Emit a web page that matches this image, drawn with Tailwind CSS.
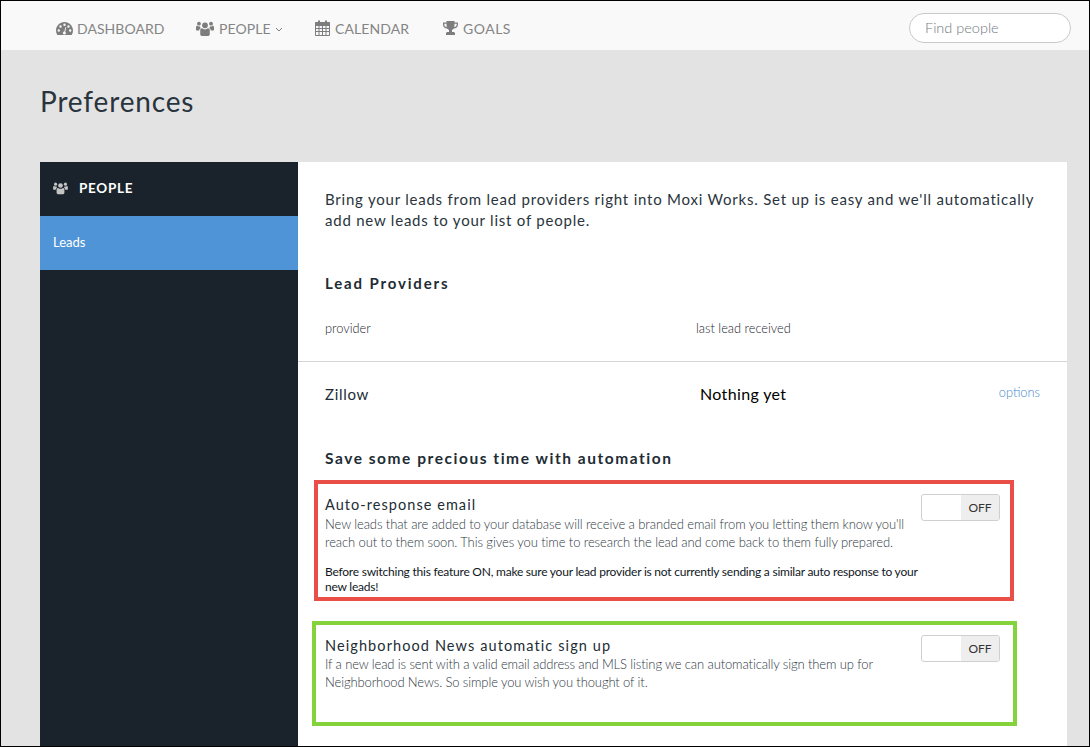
<!DOCTYPE html>
<html><head><meta charset="utf-8"><script src="https://cdn.jsdelivr.net/npm/@tailwindcss/browser@4"></script></head>
<body class="m-0">
<div class="w-[1090px] h-[747px] overflow-hidden border border-black bg-[#e3e3e3] font-['Lato',sans-serif] text-[#1b242c] box-border">
  <nav class="h-[49px] bg-[#f9f9f9] flex items-center pl-[55px] pr-[18px] text-[14px] text-[#858585]">
    <a class="flex items-center gap-[4px] w-[140px] pt-[6px]">
      <svg class="w-[17px] h-[15px]" viewBox="0 0 17 15"><path fill="#7d7d7d" fill-rule="evenodd" d="M8.5 1C3.8 1 0 4.8 0 9.5c0 1.6.4 3 1.2 4.3.2.2.4.2.6.2h13.4c.2 0 .4 0 .6-.2.8-1.3 1.2-2.7 1.2-4.3C17 4.8 13.200 1 8.500 1zM8.500 2.600a1.200 1.200 0 1 1 0 2.400 1.200 1.200 0 0 1 0-2.400zM4.500 4.300a1.200 1.200 0 1 1 0 2.400 1.200 1.200 0 0 1 0-2.400zM12.500 4.300a1.200 1.200 0 1 1 0 2.400 1.200 1.200 0 0 1 0-2.400zM2.800 8.300a1.200 1.200 0 1 1 0 2.400 1.200 1.200 0 0 1 0-2.400zM14.200 8.300a1.200 1.200 0 1 1 0 2.400 1.200 1.200 0 0 1 0-2.400zM9.500 6l.8.200-1.100 4.500c.5.400.8 1 .6 1.700-.2.800-1 1.300-1.800 1.100-.8-.2-1.300-1-1.100-1.800.2-.7.700-1.100 1.400-1.100z"/></svg>
      <span class="tracking-[0.05px]">DASHBOARD</span>
    </a>
    <a class="flex items-center gap-[5px] w-[119px] pt-[6px]">
      <svg class="w-[18px] h-[16px]" viewBox="0 0 17 15"><g fill="#7d7d7d"><circle cx="8.500" cy="4" r="2.700"/><circle cx="2.800" cy="2.500" r="1.800"/><circle cx="14.200" cy="2.500" r="1.800"/><path d="M4 8.500c0-1 .8-1.700 1.700-1.700.8.700 1.800 1.100 2.800 1.100s2-.4 2.800-1.100c.9 0 1.700.7 1.700 1.700v4c0 1-.8 1.500-1.500 1.500H5.500C4.800 14 4 13.500 4 12.500z"/><path d="M0 6c0-.9.500-1.500 1.300-1.500.5.400 1 .6 1.500.6.300 0 .7 0 1-.2 0 .8.300 1.500.8 2C3.700 7 3 8 3 9H1C.4 9 0 8.600 0 8z"/><path d="M17 6c0-.9-.5-1.500-1.300-1.500-.5.400-1 .6-1.500.6-.3 0-.7 0-1-.2 0 .8-.3 1.500-.8 2 .9.100 1.600 1.100 1.600 2.100h2c.6 0 1-.4 1-1z"/></g></svg>
      <span class="tracking-[0.1px]">PEOPLE</span>
      <svg class="w-[8px] h-[5px] -ml-[1px] mt-[1px]" viewBox="0 0 8 5"><path d="M1 1l3 3 3-3" fill="none" stroke="#7d7d7d" stroke-width="1"/></svg>
    </a>
    <a class="flex items-center gap-[5px] w-[128px] pt-[5px]">
      <svg class="w-[15px] h-[16px]" viewBox="0 0 15 16"><path fill="#7d7d7d" fill-rule="evenodd" d="M1 2h2V.5h2V2h5V.5h2V2h2c.6 0 1 .4 1 1v12c0 .6-.4 1-1 1H1c-.6 0-1-.4-1-1V3c0-.6.4-1 1-1zM1 6v2h2.500V6zM4.500 6v2H7V6zM8 6v2h2.500V6zM11.500 6v2H14V6zM1 9v2h2.500V9zM4.500 9v2H7V9zM8 9v2h2.500V9zM11.500 9v2H14V9zM1 12v2.900h2.500V12zM4.500 12v2.900H7V12zM8 12v2.900h2.500V12zM11.500 12v2.900H14V12z"/></svg>
      <span class="tracking-[0.1px]">CALENDAR</span>
    </a>
    <a class="flex items-center gap-[5px] pt-[6px]">
      <svg class="w-[15px] h-[15px]" viewBox="0 0 15 15"><path fill="#7d7d7d" fill-rule="evenodd" d="M3.500 0h8v1.500H15v2c0 2.400-1.900 4-4.500 4.300-.5.600-1 1-1.500 1.200V11h1.500c.8 0 1.500.6 1.500 1.500V14H3v-1.500c0-.9.700-1.500 1.500-1.500H6V9c-.5-.2-1-.6-1.500-1.200C1.900 7.500 0 5.900 0 3.500v-2h3.500zM1.300 2.800v.7c0 1.300.9 2.300 2.500 2.800-.2-1-.3-2.300-.3-3.500zM13.700 2.800h-2.200c0 1.200-.1 2.500-.3 3.500 1.600-.5 2.500-1.500 2.500-2.800z"/></svg>
      <span class="tracking-[0.5px]">GOALS</span>
    </a>
    <div class="ml-auto mt-[5px] w-[162px] h-[30px] rounded-full border border-[#c9c9c9] bg-white flex items-center pl-[15px] text-[14.500px] font-light text-[#707a80]">Find people</div>
  </nav>
  <h1 class="ml-[39px] mt-[30px] text-[28px] leading-[42px] font-normal tracking-[0.85px] text-[#2a343c]">Preferences</h1>
  <div class="ml-[39px] mt-[40px] w-[1027px] h-[600px] bg-white flex">
    <aside class="w-[258px] bg-[#1a232b] shrink-0">
      <div class="h-[54px] flex items-center pl-[13px] pb-[2px] gap-[11px] text-white font-bold text-[13.500px] tracking-[0.7px]">
        <svg class="w-[15px] h-[13px] mt-[1px]" viewBox="0 0 17 15"><g fill="#c4c4c4"><circle cx="8.500" cy="4" r="2.700"/><circle cx="2.800" cy="2.500" r="1.800"/><circle cx="14.200" cy="2.500" r="1.800"/><path d="M4 8.500c0-1 .8-1.700 1.700-1.700.8.700 1.800 1.100 2.800 1.100s2-.4 2.800-1.100c.9 0 1.700.7 1.700 1.700v4c0 1-.8 1.500-1.500 1.500H5.500C4.800 14 4 13.500 4 12.500z"/><path d="M0 6c0-.9.500-1.500 1.300-1.500.5.400 1 .6 1.500.6.300 0 .7 0 1-.2 0 .8.300 1.500.8 2C3.700 7 3 8 3 9H1C.4 9 0 8.600 0 8z"/><path d="M17 6c0-.9-.5-1.500-1.300-1.500-.5.400-1 .6-1.500.6-.3 0-.7 0-1-.2 0 .8-.3 1.500-.8 2 .9.100 1.600 1.100 1.600 2.100h2c.6 0 1-.4 1-1z"/></g></svg>
        <span>PEOPLE</span>
      </div>
      <div class="h-[54px] bg-[#4f94d6] flex items-center pl-[13px] text-white text-[13px]">Leads</div>
    </aside>
    <main class="flex-1 min-w-0">
      <p class="mt-[27px] ml-[27px] w-[720px] text-[15px] leading-[21px] font-normal tracking-[0.78px] text-[#2a343c]">Bring your leads from lead providers right into Moxi Works. Set up is easy and we'll automatically add new leads to your list of people.</p>
      <h2 class="ml-[27px] mt-[42px] text-[15px] leading-[20px] font-bold tracking-[1.85px] text-[#222c34]">Lead Providers</h2>
      <div class="flex ml-[27px] mt-[26px] h-[20px] items-center text-[12.800px] font-light text-[#1b242c]">
        <span class="w-[371px]">provider</span><span>last lead received</span>
      </div>
      <div class="mt-[22px] border-t border-[#d4d4d4]"></div>
      <div class="flex items-center ml-[27px] mt-[20px] h-[24px] text-[#222c34]">
        <span class="w-[375px] text-[15px] font-normal tracking-[0.7px]">Zillow</span>
        <span class="text-[16px] font-normal tracking-[0.35px] text-black">Nothing yet</span>
        <span class="ml-auto mr-[27px] -mt-[3px] text-[12.800px] font-light text-[#3f86cc]">options</span>
      </div>
      <h2 class="ml-[27px] mt-[42px] text-[15.500px] leading-[20px] font-bold tracking-[1.54px] text-[#222c34]">Save some precious time with automation</h2>
      <section class="ml-[16px] mt-[12px] w-[700px] h-[121px] border-4 border-[#e94e47] pl-[7px] pr-[10px] pt-[12px] relative">
        <h3 class="text-[14.500px] leading-[18px] font-normal tracking-[1.05px] text-[#222c34]">Auto-response email</h3>
        <p class="w-[590px] mt-[1px] text-[13px] leading-[18px] font-light tracking-[-0.09px] text-[#2f383f]">New leads that are added to your database will receive a branded email from you letting them know you'll reach out to them soon. This gives you time to research the lead and come back to them fully prepared.</p>
        <p class="mt-[13px] w-[600px] text-[12px] leading-[15px] font-normal tracking-[-0.23px] text-[#10171d]">Before switching this feature ON, make sure your lead provider is not currently sending a similar auto response to your new leads!</p>
        <div class="absolute left-[603px] top-[10px] w-[79px] h-[27px] rounded-[3px] border border-[#cfcfcf] flex overflow-hidden bg-white">
          <div class="w-[39px]"></div><div class="flex-1 bg-[#eeeeee] flex items-center justify-center pt-[1px] text-[12px] font-normal text-[#333]">OFF</div>
        </div>
      </section>
      <section class="ml-[14px] mt-[20px] w-[705px] h-[105px] border-4 border-[#84d23c] pl-[9px] pr-[10px] pt-[12px] relative">
        <h3 class="text-[14.500px] leading-[18px] font-normal tracking-[1.1px] text-[#222c34]">Neighborhood News automatic sign up</h3>
        <p class="w-[590px] text-[13px] leading-[18px] font-light tracking-[-0.12px] text-[#2f383f]">If a new lead is sent with a valid email address and MLS listing we can automatically sign them up for Neighborhood News. So simple you wish you thought of it.</p>
        <div class="absolute left-[605px] top-[10px] w-[79px] h-[27px] rounded-[3px] border border-[#cfcfcf] flex overflow-hidden bg-white">
          <div class="w-[39px]"></div><div class="flex-1 bg-[#eeeeee] flex items-center justify-center pt-[1px] text-[12px] font-normal text-[#333]">OFF</div>
        </div>
      </section>
    </main>
  </div>
</div>
</body></html>
